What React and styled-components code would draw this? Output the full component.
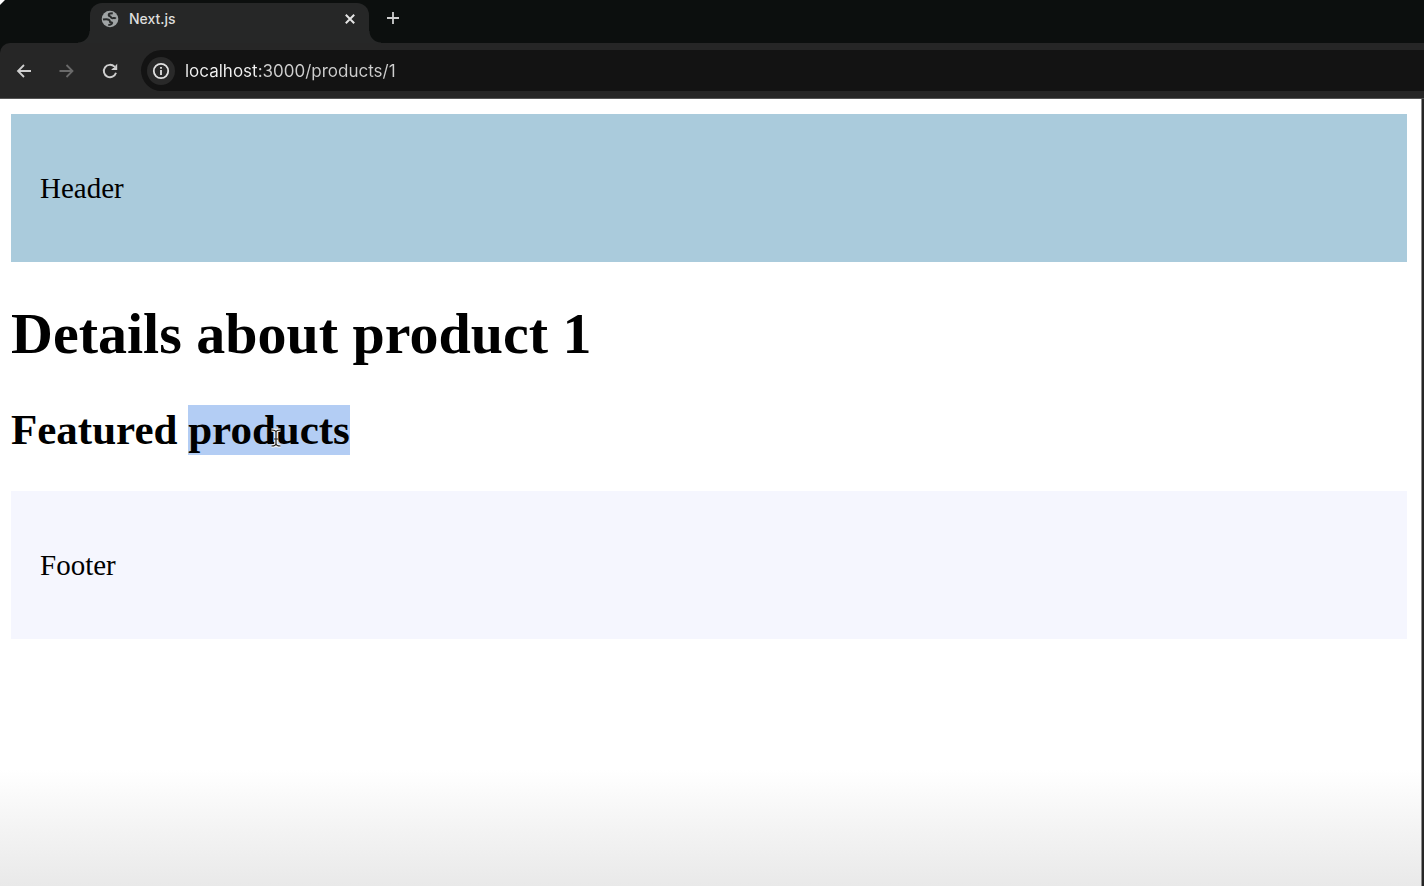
import React from "react";
import styled, { createGlobalStyle } from "styled-components";

const GlobalStyle = createGlobalStyle`
  * { box-sizing: border-box; }
  body { margin: 0; background: #fff; }
`;

const Window = styled.div`
  display: flex;
  flex-direction: column;
  min-height: 100vh;
  background: #262626;
`;

const TabStrip = styled.div`
  display: flex;
  align-items: flex-end;
  height: 43px;
  padding-left: 90px;
  background: linear-gradient(135deg, #fff 3px, #0c0f0e 4px);
`;

const Tab = styled.div`
  position: relative;
  display: flex;
  align-items: center;
  width: 279px;
  height: 40px;
  padding: 0 11px 8px 11px;
  border-radius: 12px 12px 0 0;
  background: #262727;

  &::before,
  &::after {
    content: "";
    position: absolute;
    bottom: 0;
    width: 12px;
    height: 12px;
  }
  &::before {
    right: 100%;
    background: radial-gradient(circle at 0 0, transparent 11px, #262727 12px);
  }
  &::after {
    left: 100%;
    background: radial-gradient(circle at 100% 0, transparent 11px, #262727 12px);
  }
`;

const TabTitle = styled.span`
  flex: 1;
  margin-left: 10px;
  font: 500 14px/20px Inter, sans-serif;
  color: #dededc;
`;

const IconButton = styled.button`
  display: flex;
  align-items: center;
  justify-content: center;
  flex: none;
  width: ${(p) => p.$size}px;
  height: ${(p) => p.$size}px;
  padding: 0;
  border: 0;
  border-radius: 50%;
  background: ${(p) => p.$fill || "transparent"};
  color: ${(p) => p.$color || "#cfcfcf"};
`;

const NewTab = styled.div`
  align-self: flex-start;
  padding: 4px 0 0 10px;
`;

const ToolbarBack = styled.div`
  background: #0c0f0e;
`;

const Toolbar = styled.div`
  display: flex;
  align-items: center;
  height: 56px;
  padding-left: 10px;
  border-bottom: 1px solid #555;
  border-top-left-radius: 10px;
  background: #262626;
`;

const NavButtons = styled.div`
  display: flex;
  gap: 15px;
`;

const AddressBar = styled.form`
  display: flex;
  align-items: center;
  flex: 1;
  height: 41px;
  margin-left: 17px;
  padding-left: 6px;
  border-radius: 21px 0 0 21px;
  background: #131313;
`;

const AddressInput = styled.input`
  flex: 1;
  min-width: 0;
  height: 30px;
  margin-left: 10px;
  padding: 0;
  border: 0;
  outline: 0;
  font: 400 17px/30px Inter, sans-serif;
  color: transparent;
  background: linear-gradient(90deg, #f2f2f2 74px, #cfcfcf 74px);
  background-clip: text;
`;

const Page = styled.main`
  flex: 1;
  margin-right: 2px;
  padding: 15px 14px 15px 11px;
  border-right: 1px solid #8a8a8a;
  background: linear-gradient(to top, #e9e9e9, #f4f4f4 60px, #fff 116px);
  color: #000;
  font-family: "Liberation Serif", serif;
`;

const Band = styled.div`
  padding: 58px 29px;
  background: ${(p) => p.$fill};
  font-size: 29px;
  line-height: 32px;
`;

const Title = styled.h1`
  margin: 40px 0;
  font-size: 58px;
  line-height: 63px;
`;

const Subtitle = styled.h2`
  margin: 0 0 36px;
  font-size: 43px;
  line-height: 50px;
`;

const Selected = styled.mark`
  position: relative;
  display: inline-block;
  background: #b3cdf4;
  color: inherit;
`;

const TextCursor = styled.svg`
  position: absolute;
  left: 82px;
  top: 23px;
`;

const Globe = () => (
  <svg width="18" height="18" viewBox="0 0 18 18" aria-hidden="true">
    <circle cx="9" cy="9" r="8.3" fill="#a0a4a5" />
    <path
      d="M11.8 3.2 9.2 3.5C7 4 7.400 5.800 8.900 6.200c1.300.3.7 1.700 2 1.900 1.600.2 3.100-.5 3.900.5"
      fill="none"
      stroke="#292b2b"
      strokeWidth="2"
    />
    <path
      d="M2 9.600c2.200-.5 4.500-.7 6 .2 1.600 1 .2 2.200 1.500 2.500 1.600.3 2.200.4 1.200 1.500-.8.9-2 1.100-3.400 1.200"
      fill="none"
      stroke="#292b2b"
      strokeWidth="2"
    />
  </svg>
);

const Arrow = ({ forward }) => (
  <svg width="18" height="18" viewBox="0 0 18 18" fill="none" stroke="currentColor" strokeWidth="1.8" aria-hidden="true">
    <path d={forward ? "M1.500 9h13M8.500 3 14.500 9l-6 6" : "M16 9H3M9 3 3 9l6 6"} />
  </svg>
);

const Reload = () => (
  <svg width="18" height="18" viewBox="0 0 18 18" fill="none" stroke="currentColor" strokeWidth="1.900" aria-hidden="true">
    <path d="M15 10.800A6.200 6.200 0 1 1 13.500 4.700L14.500 5.800" />
    <path d="M16.200 1.800v6.100h-6.100l2-2h2.200v-2.200Z" fill="currentColor" stroke="none" />
  </svg>
);

const Info = () => (
  <svg width="18" height="18" viewBox="0 0 18 18" fill="none" stroke="currentColor" strokeWidth="1.800" aria-hidden="true">
    <circle cx="9" cy="9" r="7.200" />
    <path d="M9 8v5M9 5v1.800" />
  </svg>
);

export default function App() {
  return (
    <Window>
      <GlobalStyle />
      <TabStrip>
        <Tab>
          <Globe />
          <TabTitle>Next.js</TabTitle>
          <IconButton $size={16} $color="#e4e4e4" aria-label="Close tab">
            <svg width="12" height="12" viewBox="0 0 12 12" stroke="currentColor" strokeWidth="2" aria-hidden="true">
              <path d="m1.800 1.800 8.400 8.400M10.200 1.800 1.800 10.200" />
            </svg>
          </IconButton>
        </Tab>
        <NewTab>
          <IconButton $size={28} aria-label="New tab">
            <svg width="14" height="14" viewBox="0 0 14 14" stroke="currentColor" strokeWidth="1.800" aria-hidden="true">
              <path d="M7 1v12M1 7h12" />
            </svg>
          </IconButton>
        </NewTab>
      </TabStrip>
      <ToolbarBack>
        <Toolbar>
          <NavButtons>
            <IconButton $size={28} aria-label="Back"><Arrow /></IconButton>
            <IconButton $size={28} $color="#6a6a6a" aria-label="Forward"><Arrow forward /></IconButton>
            <IconButton $size={28} aria-label="Reload"><Reload /></IconButton>
          </NavButtons>
          <AddressBar>
            <IconButton $size={28} $fill="#292929" $color="#e0e0e0" type="button" aria-label="Site information"><Info /></IconButton>
            <AddressInput aria-label="Address" defaultValue="localhost:3000/products/1" spellCheck={false} />
          </AddressBar>
        </Toolbar>
      </ToolbarBack>
      <Page>
        <Band as="header" $fill="#aacbdc">Header</Band>
        <Title>Details about product 1</Title>
        <Subtitle>
          Featured{" "}
          <Selected>
            products
            <TextCursor width="12" height="20" viewBox="0 0 12 20" fill="none" aria-hidden="true">
              <path d="M1.500 2C4 2 6 2.500 6 4.500v11c0 2-2 2.500-4.500 2.500M10.500 2C8 2 6 2.500 6 4.500v11c0 2 2 2.500 4.500 2.500M4 11h4" stroke="#f4f4f4" strokeWidth="3.500" />
              <path d="M1.500 2C4 2 6 2.500 6 4.500v11c0 2-2 2.500-4.500 2.500M10.500 2C8 2 6 2.500 6 4.500v11c0 2 2 2.500 4.500 2.500M4 11h4" stroke="#222" strokeWidth="1.200" />
            </TextCursor>
          </Selected>
        </Subtitle>
        <Band as="footer" $fill="#f5f6fe">Footer</Band>
      </Page>
    </Window>
  );
}
